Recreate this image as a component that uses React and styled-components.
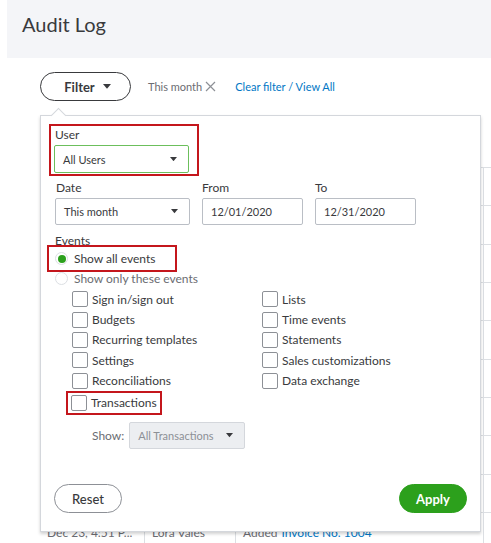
import React from 'react';
import styled, { createGlobalStyle } from 'styled-components';

const GlobalStyle = createGlobalStyle`
  body {
    margin: 0;
    background: #ffffff;
    font-family: Lato, "Open Sans", Arial, sans-serif;
    color: #393a3d;
  }
  * { box-sizing: border-box; }
`;

const Page = styled.div`
  width: 491px;
  height: 543px;
  overflow: hidden;
  position: relative;
`;

const Header = styled.header`
  margin-left: 7px;
  height: 58px;
  background: #f4f5f8;
  padding: 11px 0 0 15px;
  font-size: 20px;
  line-height: 26px;
  color: #393a3d;
`;

const Toolbar = styled.div`
  display: flex;
  align-items: center;
  margin-top: 14px;
  padding-left: 40px;
  height: 29px;
`;

const FilterButton = styled.button`
  display: flex;
  align-items: center;
  justify-content: center;
  gap: 8px;
  width: 91px;
  height: 29px;
  border: 1.5px solid #393a3d;
  border-radius: 15px;
  background: #fff;
  font-family: inherit;
  font-size: 13px;
  font-weight: 700;
  color: #393a3d;
  padding: 0 0 0 4px;
`;

const Chip = styled.span`
  display: flex;
  align-items: center;
  gap: 3px;
  margin-left: 17px;
  font-size: 11px;
  color: #6b6c72;
`;

const LinkText = styled.span`
  margin-left: 19px;
  font-size: 11px;
  color: #0077c5;
`;

const Content = styled.div`
  position: relative;
  margin-top: 14px;
`;

const Table = styled.div`
  margin-left: 40px;
  width: 520px;
`;

const HeadRow = styled.div`
  height: 53px;
  border-bottom: 1px solid #dcdfe3;
`;

const Row = styled.div`
  display: grid;
  grid-template-columns: 104px 91px 248px 1fr;
  height: 38.33px;
  border-bottom: 1px solid #dcdfe3;
  font-size: 12px;
`;

const Cell = styled.div`
  display: flex;
  align-items: center;
  padding: 2px 0 0 7px;
  border-left: ${(p) => (p.first ? 'none' : '1px solid #dcdfe3')};
  white-space: nowrap;
  overflow: hidden;
  color: #6b6c72;
`;

const Blue = styled.span`
  color: #0077c5;
  margin-left: 4px;
`;

const Panel = styled.div`
  position: absolute;
  left: 40px;
  top: 0;
  width: 441px;
  height: 417px;
  background: #fff;
  border: 1px solid #d4d7dc;
  box-shadow: 0 2px 3px rgba(0, 0, 0, 0.18);
  padding: 8px 13px 0 13px;
  display: flex;
  flex-direction: column;

  &::before {
    content: '';
    position: absolute;
    left: 12px;
    top: -6px;
    width: 10px;
    height: 10px;
    background: #fff;
    border-left: 1px solid #d4d7dc;
    border-top: 1px solid #d4d7dc;
    transform: rotate(45deg);
  }
`;

const Highlight = styled.div`
  border: 2px solid #c4161c;
  width: ${(p) => p.w}px;
  height: ${(p) => p.h}px;
  margin-left: ${(p) => p.ml || 0}px;
  padding: ${(p) => p.pad || '0'};
  display: flex;
  flex-direction: ${(p) => (p.row ? 'row' : 'column')};
  align-items: ${(p) => (p.row ? 'center' : 'stretch')};
`;

const Label = styled.div`
  font-size: 12px;
  line-height: 16px;
  color: #393a3d;
  margin-left: ${(p) => p.ml || 0}px;
`;

const Select = styled.div`
  display: flex;
  align-items: center;
  justify-content: space-between;
  width: ${(p) => p.w}px;
  height: ${(p) => p.h || 27}px;
  border: 1px solid ${(p) => (p.green ? '#6cbf5c' : p.muted ? '#d4d7dc' : '#babec5')};
  border-radius: 2px;
  background: ${(p) => (p.muted ? '#eceef1' : '#fff')};
  padding: 0 11px 0 8px;
  font-size: 11px;
  color: ${(p) => (p.muted ? '#8d9096' : '#393a3d')};
`;

const DateRow = styled.div`
  display: flex;
  gap: 12px;
  margin-top: 4px;
  margin-left: 1px;
`;

const Field = styled.div`
  display: flex;
  flex-direction: column;
  gap: 2px;
`;

const RadioRow = styled.div`
  display: flex;
  align-items: center;
  gap: 6px;
  font-size: 12px;
  height: 18px;
  margin-left: ${(p) => p.ml || 0}px;
`;

const Radio = styled.span`
  width: 13px;
  height: 13px;
  border-radius: 50%;
  border: 1px solid #dcdfe3;
  background: #fff;
  display: flex;
  align-items: center;
  justify-content: center;

  &::after {
    content: '';
    width: 8px;
    height: 8px;
    border-radius: 50%;
    background: ${(p) => (p.on ? '#2ca01c' : 'transparent')};
  }
`;

const RadioText = styled.span`
  color: ${(p) => (p.faint ? '#6b6c72' : '#393a3d')};
`;

const CheckGrid = styled.div`
  display: grid;
  grid-template-columns: 190px 1fr;
  grid-auto-rows: 20.4px;
  margin-left: 18px;
  margin-top: 2px;
`;

const CheckItem = styled.div`
  display: flex;
  align-items: center;
  gap: 4px;
  font-size: 12px;
  color: #393a3d;
`;

const Box = styled.span`
  width: 16px;
  height: 16px;
  border: 1px solid #8d9096;
  border-radius: 2px;
  background: #fff;
  flex-shrink: 0;
`;

const ShowRow = styled.div`
  display: flex;
  align-items: center;
  gap: 5px;
  margin-left: 38px;
  margin-top: 7px;
  font-size: 12px;
  color: #6b6c72;
`;

const Footer = styled.div`
  display: flex;
  justify-content: space-between;
  margin-top: auto;
  margin-bottom: 18px;
`;

const PillButton = styled.button`
  width: ${(p) => p.w}px;
  height: 29px;
  border-radius: 15px;
  font-family: inherit;
  font-size: 13px;
  font-weight: ${(p) => (p.primary ? 700 : 500)};
  border: 1px solid ${(p) => (p.primary ? '#2ca01c' : '#8d9096')};
  background: ${(p) => (p.primary ? '#2ca01c' : '#fff')};
  color: ${(p) => (p.primary ? '#fff' : '#393a3d')};
`;

const Caret = ({ size = 7, color = '#393a3d' }) => (
  <svg width={size} height={size * 0.6} viewBox="0 0 10 6">
    <path d="M0 0 L10 0 L5 6 Z" fill={color} />
  </svg>
);

const Cross = () => (
  <svg width="11" height="11" viewBox="0 0 11 11">
    <path d="M1 1 L10 10 M10 1 L1 10" stroke="#8d9096" strokeWidth="1.2" />
  </svg>
);

const leftEvents = ['Sign in/sign out', 'Budgets', 'Recurring templates', 'Settings', 'Reconciliations'];
const rightEvents = ['Lists', 'Time events', 'Statements', 'Sales customizations', 'Data exchange'];

// log rows behind the filter popover; only the last one shows below it
const ROW_COUNT = 10;

const App = () => {
  const eventCells = [];
  leftEvents.forEach((name, i) => {
    eventCells.push(
      <CheckItem key={name}>
        <Box />
        {name}
      </CheckItem>
    );
    eventCells.push(
      <CheckItem key={rightEvents[i]}>
        <Box />
        {rightEvents[i]}
      </CheckItem>
    );
  });

  const last = ROW_COUNT - 1;

  return (
    <Page>
      <GlobalStyle />
      <Header>Audit Log</Header>
      <Toolbar>
        <FilterButton>
          Filter <Caret size={8} />
        </FilterButton>
        <Chip>
          This month <Cross />
        </Chip>
        <LinkText>Clear filter / View All</LinkText>
      </Toolbar>

      <Content>
        <Table>
          <HeadRow />
          {Array.from({ length: ROW_COUNT }).map((_, i) => (
            <Row key={i}>
              <Cell first>{i === last ? 'Dec 23, 4:51 P...' : ''}</Cell>
              <Cell>{i === last ? 'Lora Vales' : ''}</Cell>
              <Cell>
                {i === last ? (
                  <>
                    Added<Blue>Invoice No. 1004</Blue>
                  </>
                ) : (
                  ''
                )}
              </Cell>
              <Cell />
            </Row>
          ))}
        </Table>

        <Panel>
          <Highlight w={150} h={52} ml={-5} pad="1px 8px 0 3px">
            <Label ml={1}>User</Label>
            <Select w={135} h={28} green style={{ marginTop: 2 }}>
              All Users <Caret />
            </Select>
          </Highlight>

          <DateRow>
            <Field>
              <Label ml={1}>Date</Label>
              <Select w={135}>
                This month <Caret />
              </Select>
            </Field>
            <Field>
              <Label>From</Label>
              <Select w={101}>12/01/2020</Select>
            </Field>
            <Field>
              <Label>To</Label>
              <Select w={101}>12/31/2020</Select>
            </Field>
          </DateRow>

          <Label ml={1} style={{ marginTop: 8 }}>Events</Label>
          <Highlight w={130} h={27} ml={-7} row pad="0 0 0 6px" style={{ marginTop: -4 }}>
            <RadioRow>
              <Radio on />
              <RadioText>Show all events</RadioText>
            </RadioRow>
          </Highlight>
          <RadioRow ml={1} style={{ marginTop: -3 }}>
            <Radio />
            <RadioText faint>Show only these events</RadioText>
          </RadioRow>

          <CheckGrid>{eventCells}</CheckGrid>
          <Highlight w={96} h={24} ml={12} row pad="0 0 0 3px">
            <CheckItem>
              <Box />
              Transactions
            </CheckItem>
          </Highlight>

          <ShowRow>
            Show:
            <Select w={116} muted>
              All Transactions <Caret />
            </Select>
          </ShowRow>

          <Footer>
            <PillButton w={68}>Reset</PillButton>
            <PillButton w={68} primary>
              Apply
            </PillButton>
          </Footer>
        </Panel>
      </Content>
    </Page>
  );
};

export default App;
